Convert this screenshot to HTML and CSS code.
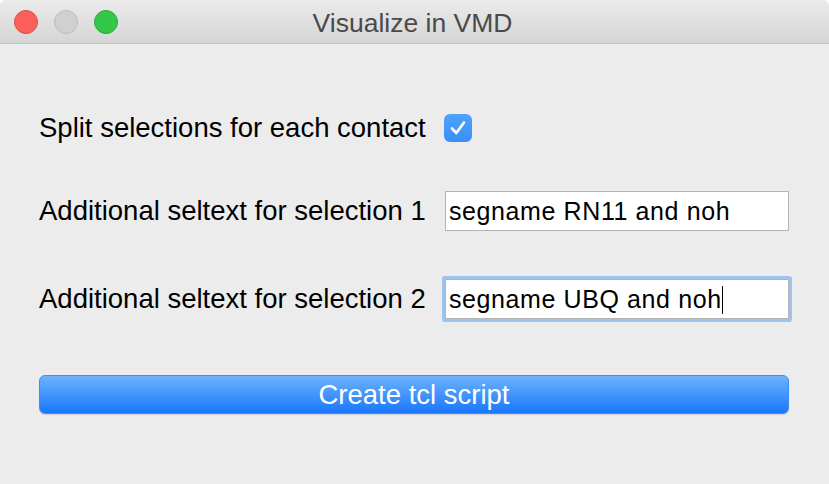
FILE: index.html
```html
<!DOCTYPE html>
<html>
<head>
<meta charset="utf-8">
<link rel="stylesheet" href="styles.css">
</head>
<body>
<div class="window">
  <div class="titlebar">
    <div class="lights">
      <span class="light red"></span>
      <span class="light gray"></span>
      <span class="light green"></span>
    </div>
    <div class="title">Visualize in VMD</div>
  </div>
  <div class="content">
    <div class="row row-check">
      <span class="label">Split selections for each contact</span>
      <span class="checkbox">
        <svg width="28" height="28" viewBox="0 0 28 28"><path d="M8 14.5 L12.3 19 L20 8.5" fill="none" stroke="#fff" stroke-width="2.6" stroke-linecap="round" stroke-linejoin="round"/></svg>
      </span>
    </div>
    <div class="row row-field1">
      <span class="label">Additional seltext for selection 1</span>
      <div class="field">segname RN11 and noh</div>
    </div>
    <div class="row row-field2">
      <span class="label">Additional seltext for selection 2</span>
      <div class="field focused">segname UBQ and noh<span class="caret"></span></div>
    </div>
    <div class="button">Create tcl script</div>
  </div>
</div>
</body>
</html>
```
FILE: styles.css
```css
html, body {
  margin: 0;
  padding: 0;
  background: #ffffff;
}
body {
  width: 829px;
  height: 484px;
  overflow: hidden;
  font-family: "Liberation Sans", Arial, sans-serif;
}
.window {
  width: 829px;
  height: 484px;
  background: #ececec;
  border-radius: 6px 6px 0 0;
  overflow: hidden;
  display: flex;
  flex-direction: column;
}
.titlebar {
  height: 44px;
  box-sizing: border-box;
  border-bottom: 1px solid #c4c4c4;
  background: linear-gradient(#ebebeb, #d6d5d6);
  display: flex;
  align-items: center;
  position: relative;
}
.lights {
  display: flex;
  gap: 16px;
  padding-left: 14px;
  padding-top: 1px;
}
.light {
  width: 24px;
  height: 24px;
  border-radius: 50%;
  box-sizing: border-box;
}
.red { background: #fc605b; border: 1px solid #de4a45; }
.gray { background: #d0d0d0; border: 1px solid #bcbcbc; }
.green { background: #34c84a; border: 1px solid #27a937; }
.title {
  position: absolute;
  left: 0;
  right: 0;
  top: 0;
  height: 44px;
  line-height: 47px;
  text-align: center;
  font-size: 26.5px;
  color: #4a4a4a;
  pointer-events: none;
  padding-right: 4px;
}
.content {
  padding: 70px 40px 0 39px;
  display: flex;
  flex-direction: column;
}
.row {
  display: flex;
  align-items: center;
  font-size: 27.5px;
  color: #000;
}
.label {
  white-space: nowrap;
}
.row-check {
  height: 28px;
}
.checkbox {
  width: 28px;
  height: 28px;
  margin-left: 18px;
  border-radius: 6px;
  background: linear-gradient(#4ea3fb, #3a8ff8);
  display: flex;
}
.row-field1 {
  margin-top: 49px;
  height: 40px;
}
.row-field2 {
  margin-top: 48px;
  height: 40px;
}
.field {
  margin-left: auto;
  width: 344px;
  height: 40px;
  box-sizing: border-box;
  border: 1px solid #b3b3b3;
  background: #fff;
  padding-left: 3px;
  padding-top: 1px;
  font-size: 25px;
  letter-spacing: 0.6px;
  color: #000;
  display: flex;
  align-items: center;
}
.field.focused {
  box-shadow: 0 0 0 3px #9dc4ef;
  border-radius: 1px;
}
.caret {
  display: inline-block;
  width: 1.5px;
  height: 28px;
  background: #000;
  margin-left: 0px;
}
.button {
  margin-top: 56px;
  height: 39px;
  box-sizing: border-box;
  border-radius: 6px;
  border: 1px solid #3f8df3;
  background: linear-gradient(#6cb3fa, #1977fd);
  color: #fff;
  font-size: 27.5px;
  display: flex;
  align-items: center;
  justify-content: center;
  box-shadow: 0 1px 1px rgba(0,0,0,0.12);
}
```
